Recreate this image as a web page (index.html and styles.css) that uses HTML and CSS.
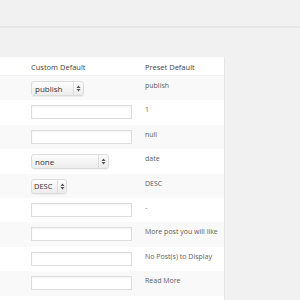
FILE: index.html
```html
<!DOCTYPE html>
<html lang="en">
<head>
    <meta charset="UTF-8">
    <meta name="viewport" content="width=device-width, initial-scale=1.0">
    <title>Widget Defaults</title>
    <link rel="stylesheet" href="styles.css">
</head>
<body>
    <div class="topbar"></div>

    <div class="defaults">
        <div class="row head">
            <div class="cell label"></div>
            <div class="cell custom">Custom Default</div>
            <div class="cell preset">Preset Default</div>
        </div>

        <!-- post status -->
        <div class="row alt">
            <div class="cell label"></div>
            <div class="cell custom">
                <div class="select select-status"><span class="select-text">publish</span><span class="select-arrow"><svg width="5" height="7" viewBox="0 0 5 7"><path d="M2.5 0.5L4.5 3H0.5Z M2.5 6.5L4.5 4H0.5Z" fill="#555"/></svg></span></div>
            </div>
            <div class="cell preset">publish</div>
        </div>

        <div class="row">
            <div class="cell label"></div>
            <div class="cell custom"><input class="text-input" type="text"></div>
            <div class="cell preset">1</div>
        </div>

        <div class="row alt">
            <div class="cell label"></div>
            <div class="cell custom"><input class="text-input" type="text"></div>
            <div class="cell preset">null</div>
        </div>

        <!-- order by -->
        <div class="row">
            <div class="cell label"></div>
            <div class="cell custom">
                <div class="select select-orderby"><span class="select-text">none</span><span class="select-arrow"><svg width="5" height="7" viewBox="0 0 5 7"><path d="M2.5 0.5L4.5 3H0.5Z M2.5 6.5L4.5 4H0.5Z" fill="#555"/></svg></span></div>
            </div>
            <div class="cell preset">date</div>
        </div>

        <div class="row alt">
            <div class="cell label"></div>
            <div class="cell custom">
                <div class="select select-order"><span class="select-text">DESC</span><span class="select-arrow"><svg width="5" height="7" viewBox="0 0 5 7"><path d="M2.5 0.5L4.5 3H0.5Z M2.5 6.5L4.5 4H0.5Z" fill="#555"/></svg></span></div>
            </div>
            <div class="cell preset">DESC</div>
        </div>

        <div class="row">
            <div class="cell label"></div>
            <div class="cell custom"><input class="text-input" type="text"></div>
            <div class="cell preset">-</div>
        </div>

        <div class="row alt">
            <div class="cell label"></div>
            <div class="cell custom"><input class="text-input" type="text"></div>
            <div class="cell preset">More post you will like</div>
        </div>

        <div class="row">
            <div class="cell label"></div>
            <div class="cell custom"><input class="text-input" type="text"></div>
            <div class="cell preset">No Post(s) to Display</div>
        </div>

        <div class="row alt">
            <div class="cell label"></div>
            <div class="cell custom"><input class="text-input" type="text"></div>
            <div class="cell preset">Read More</div>
        </div>

        <div class="row">
            <div class="cell label"></div>
            <div class="cell custom"></div>
            <div class="cell preset"></div>
        </div>
    </div>
</body>
</html>
```

FILE: styles.css
```css
body {
    font-family: "Open Sans", Arial, sans-serif;
    background-color: #f1f1f1;
    margin: 0;
    padding: 0;
    color: #5e5e5e;
}

.topbar {
    height: 26px;
    border-bottom: 2px solid #e5e5e5;
}

.defaults {
    margin-top: 29px;
    width: 224px;
    background: #fff;
    border-right: 1px solid #e5e5e5;
}

.row {
    display: grid;
    grid-template-columns: 30px 115px 1fr;
    height: 24.4px;
}

.row.alt {
    background: #f9f9f9;
}

.row.head {
    height: 19px;
    border-bottom: 1px solid #f1f1f1;
    box-sizing: border-box;
}

.cell {
    font-size: 7px;
    line-height: 10px;
    white-space: nowrap;
}

.head .cell {
    color: #444;
    font-size: 7.5px;
    padding-top: 5px;
}

.preset {
    padding-top: 5px;
}

.custom {
    padding-top: 5px;
    padding-left: 1px;
    box-sizing: border-box;
}

.text-input {
    display: block;
    width: 101px;
    height: 14px;
    margin: 0;
    padding: 0;
    box-sizing: border-box;
    border: 1px solid #ddd;
    background: #fff;
    box-shadow: inset 0 1px 2px rgba(0, 0, 0, 0.05);
    outline: none;
}

.select {
    display: flex;
    height: 15px;
    box-sizing: border-box;
    border: 1px solid #dcdcdc;
    border-radius: 3px;
    background: linear-gradient(#fdfdfd, #ececec);
    box-shadow: 0 1px 1px rgba(0, 0, 0, 0.05);
    color: #333;
    font-size: 8px;
    line-height: 13px;
    overflow: hidden;
}

.select-text {
    flex: 1;
    padding-left: 3px;
}

.select-arrow {
    flex: none;
    width: 9px;
    border-left: 1px solid #ddd;
    display: flex;
    align-items: center;
    justify-content: center;
}

.select-status {
    width: 53px;
}

.select-orderby {
    width: 78px;
}

.select-order {
    width: 36px;
}

.select-order .select-text {
    padding-left: 2px;
    font-size: 7.5px;
}

.select-order .select-arrow {
    width: 8px;
}
```
